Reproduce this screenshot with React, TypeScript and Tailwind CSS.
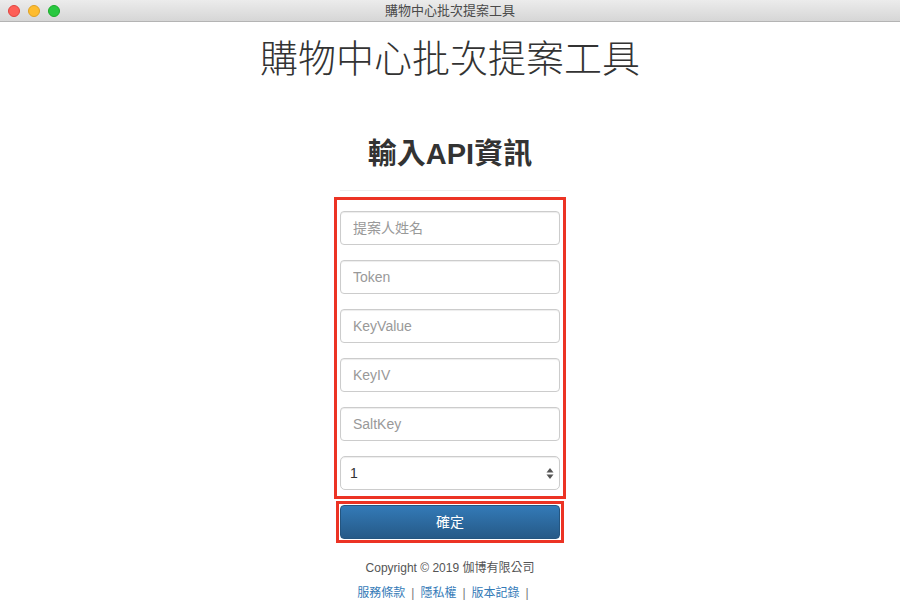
import React from "react";

const FONT = '"Liberation Sans", "Noto Sans CJK TC", sans-serif';

function Field({ placeholder }: { placeholder: string }) {
  return (
    <input
      readOnly
      placeholder={placeholder}
      className="block h-[34px] w-[220px] rounded-[4px] border border-[#cccccc] bg-white px-[12px] text-[14px] text-[#555] shadow-[inset_0_1px_1px_rgba(0,0,0,0.075)] outline-none placeholder:text-[#999]"
      style={{ fontFamily: FONT }}
    />
  );
}

export default function App() {
  return (
    <div className="min-h-[600px] w-[900px] bg-white" style={{ fontFamily: FONT }}>
      <div className="relative flex h-[22px] items-center justify-center border-b border-[#b4b4b4] bg-gradient-to-b from-[#ececec] to-[#d6d6d6]">
        <div className="absolute left-[8px] top-[5px] flex gap-[8px]">
          <span className="h-[12px] w-[12px] rounded-full border border-[#e0443e] bg-[#fe5f57]" />
          <span className="h-[12px] w-[12px] rounded-full border border-[#dea123] bg-[#febc2e]" />
          <span className="h-[12px] w-[12px] rounded-full border border-[#1aab29] bg-[#28c840]" />
        </div>
        <span className="text-[13px] text-[#4a4a4a]">購物中心批次提案工具</span>
      </div>

      <div className="flex flex-col items-center">
        <h1 className="mt-[14px] text-[38px] font-light leading-[46px] tracking-[0px] text-[#333]">
          購物中心批次提案工具
        </h1>
        <h2 className="mt-[54px] text-[29px] font-bold leading-[36px] text-[#333]">輸入API資訊</h2>
        <div className="mt-[18px] h-px w-[220px] bg-[#eeeeee]" />
        <div className="mt-[6px] flex w-[232px] flex-col gap-[15px] border-[3px] border-[#ec3324] px-[3px] pb-[6px] pt-[11px]">
          <Field placeholder="提案人姓名" />
          <Field placeholder="Token" />
          <Field placeholder="KeyValue" />
          <Field placeholder="KeyIV" />
          <Field placeholder="SaltKey" />
          <div className="flex h-[34px] w-[220px] items-center justify-between rounded-[5px] border border-[#cccccc] bg-white pl-[9px] pr-[5px] text-[14px] text-[#333] shadow-[inset_0_1px_1px_rgba(0,0,0,0.075)]">
            <span>1</span>
            <svg width="8" height="13" viewBox="0 0 8 13">
              <path d="M4 1 L7.5 5.5 L0.5 5.5 Z" fill="#555" />
              <path d="M4 12 L7.5 7.5 L0.5 7.5 Z" fill="#555" />
            </svg>
          </div>
        </div>
        <div className="mt-[2px] w-[228px] border-[3px] border-[#ec3324] p-[1px]">
          <div className="flex h-[34px] w-[220px] items-center justify-center rounded-[4px] border border-[#245580] bg-gradient-to-b from-[#337ab7] to-[#265a88] text-[14px] text-white">
            確定
          </div>
        </div>
        <div className="mt-[16px] text-[12px] text-[#555]">Copyright © 2019 伽博有限公司</div>
        <div className="mt-[7px] flex items-center gap-[6px] pr-[14px] text-[12px]">
          <span className="text-[#337ab7]">服務條款</span>
          <span className="text-[#777]">|</span>
          <span className="text-[#337ab7]">隱私權</span>
          <span className="text-[#777]">|</span>
          <span className="text-[#337ab7]">版本記錄</span>
          <span className="text-[#777]">|</span>
        </div>
      </div>
    </div>
  );
}
